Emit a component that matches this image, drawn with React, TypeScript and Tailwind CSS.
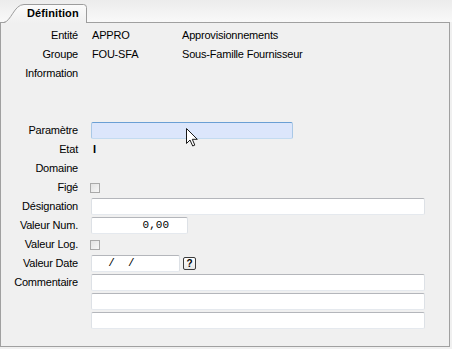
import React from 'react';

function Label({ children }: { children: React.ReactNode }) {
  return <div className="flex items-center justify-end whitespace-nowrap">{children}</div>;
}

function TextBox({ width, children, focused }: { width: string; children?: React.ReactNode; focused?: boolean }) {
  const base = focused
    ? 'border-[#6a9fd4] border-l-[#a9c8e6] border-r-[#a9c8e6] border-b-[#c3dbf0] bg-[#dce6fb]'
    : 'border-[#b4b6bb] border-l-[#dde1e6] border-r-[#dde1e6] border-b-[#e5e9ee] bg-white';
  return (
    <div className={`${width} h-[17px] border rounded-[2px] flex items-center ${base}`}>{children}</div>
  );
}

function CheckBox() {
  return (
    <div className="w-[10px] h-[10px] -ml-px border border-[#a9a9a9] bg-gradient-to-br from-[#e2e2e2] to-[#f7f7f7]" />
  );
}

export default function App() {
  return (
    <div className="relative w-[452px] h-[349px] bg-[#f0f0f0] text-[11px] tracking-[-0.2px] text-black font-['Liberation_Sans',Arial,sans-serif] overflow-hidden">
      {/* bandeau des onglets */}
      <div className="h-[22px] flex items-end pl-[3px] bg-gradient-to-b from-[#ececec] to-[#f9f9f9]">
        <div className="relative z-10 w-[86px] h-[20px] -mb-px flex items-center pl-[24px] pt-[1px]">
          <svg className="absolute left-0 top-0" width="86" height="20" viewBox="0 0 86 20">
            <defs>
              <linearGradient id="tabg" x1="0" y1="0" x2="0" y2="1">
                <stop offset="0" stopColor="#fbfbfb" />
                <stop offset="1" stopColor="#f0f0f0" />
              </linearGradient>
            </defs>
            <path d="M0.5 20 C 8 19, 11 1.5, 21 1.5 H 80.5 Q 83.5 1.5 83.5 4.5 V 20 Z" fill="url(#tabg)" />
            <path d="M0.5 19.5 C 8 19, 11 1.5, 21 1.5 H 80.5 Q 83.5 1.5 83.5 4.5 V 20" fill="none" stroke="#9c9c9c" />
          </svg>
          <span className="relative font-bold text-[11px] tracking-[0.1px]">Définition</span>
        </div>
      </div>

      {/* panneau */}
      <div className="w-[450px] h-[325px] border border-[#a0a0a0] bg-[#f0f0f0] pt-[3px]">
        <div className="grid grid-cols-[77px_1fr] auto-rows-[19px] gap-x-[13px]">
          <Label>Entité</Label>
          <div className="flex items-center">
            <span className="w-[91px] pl-px">APPRO</span>
            <span>Approvisionnements</span>
          </div>

          <Label>Groupe</Label>
          <div className="flex items-center">
            <span className="w-[91px] pl-px">FOU-SFA</span>
            <span>Sous-Famille Fournisseur</span>
          </div>

          <Label>Information</Label>
          <div />

          <div />
          <div />
          <div />
          <div />

          <Label>Paramètre</Label>
          <div className="flex items-center">
            <TextBox width="w-[202px]" focused />
          </div>

          <Label>Etat</Label>
          <div className="flex items-center pl-[2px] font-bold">I</div>

          <Label>Domaine</Label>
          <div />

          <Label>Figé</Label>
          <div className="flex items-center">
            <CheckBox />
          </div>

          <Label>Désignation</Label>
          <div className="flex items-center">
            <TextBox width="w-[334px]" />
          </div>

          <Label>Valeur Num.</Label>
          <div className="flex items-center">
            <TextBox width="w-[97px]">
              <span className="w-full text-right pr-[18px] font-['Liberation_Mono',monospace] tracking-normal">0,00</span>
            </TextBox>
          </div>

          <Label>Valeur Log.</Label>
          <div className="flex items-center">
            <CheckBox />
          </div>

          <Label>Valeur Date</Label>
          <div className="flex items-center gap-[3px]">
            <TextBox width="w-[89px]">
              <span className="pl-[3px] whitespace-pre font-['Liberation_Mono',monospace] tracking-normal">{'  /  /'}</span>
            </TextBox>
            <div className="w-[13px] h-[13px] border border-[#3c3c3c] rounded-[2px] bg-gradient-to-b from-white to-[#e8e8e8] flex items-center justify-center font-bold text-[10px] leading-none tracking-normal">
              ?
            </div>
          </div>

          <Label>Commentaire</Label>
          <div className="flex items-center">
            <TextBox width="w-[334px]" />
          </div>
          <div />
          <div className="flex items-center">
            <TextBox width="w-[334px]" />
          </div>
          <div />
          <div className="flex items-center">
            <TextBox width="w-[334px]" />
          </div>
        </div>
      </div>

      {/* pointeur de souris */}
      <svg className="absolute left-[186px] top-[128px]" width="13" height="20" viewBox="0 0 13 20">
        <path d="M0.5 0.5 V15.5 L4 12 L6.7 18 L8.8 17.1 L6.3 11.3 H11.3 Z" fill="white" stroke="#1a1a1a" strokeLinejoin="round" />
      </svg>
    </div>
  );
}
